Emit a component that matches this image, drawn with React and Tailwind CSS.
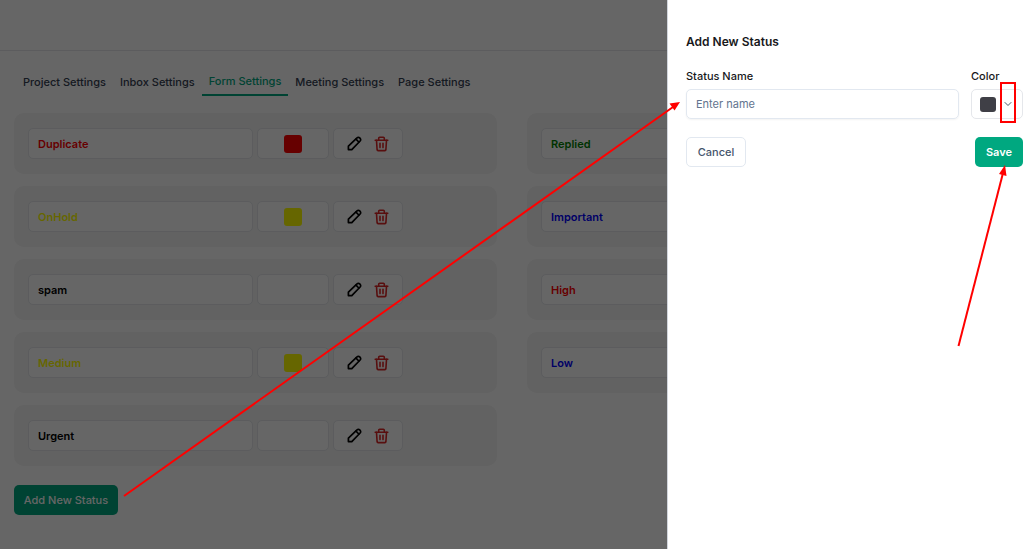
import { useState } from "react";
import { ChevronDown } from "lucide-react";

const tabs = ["Project Settings", "Inbox Settings", "Form Settings", "Meeting Settings", "Page Settings"];

const statuses = [
  { name: "Duplicate", text: "text-[#ff0000]", swatch: "bg-[#ff0000]" },
  { name: "Replied", text: "text-[#008000]", swatch: "bg-[#008000]" },
  { name: "OnHold", text: "text-[#ffff00]", swatch: "bg-[#ffff00]" },
  { name: "Important", text: "text-[#0000ff]", swatch: "bg-[#0000ff]" },
  { name: "spam", text: "text-black", swatch: "" },
  { name: "High", text: "text-[#ff0000]", swatch: "bg-[#ff0000]" },
  { name: "Medium", text: "text-[#ffff00]", swatch: "bg-[#ffff00]" },
  { name: "Low", text: "text-[#0000ff]", swatch: "bg-[#0000ff]" },
  { name: "Urgent", text: "text-black", swatch: "" },
];

const PencilIcon = () => (
  <svg width="15" height="15" viewBox="0 0 15 15" fill="none" stroke="currentColor" strokeWidth="1.7" strokeLinejoin="round" strokeLinecap="round">
    <path d="M1.4 13.6v-3.4L10 1.9a1.9 1.9 0 0 1 2.7 0l.4.4a1.9 1.9 0 0 1 0 2.7L4.8 13.6z" />
    <path d="M9 3.2l2.8 2.8" />
  </svg>
);

const TrashIcon = () => (
  <svg width="15" height="16" viewBox="0 0 15 16" fill="none" stroke="currentColor" strokeWidth="1.6" strokeLinejoin="round" strokeLinecap="round">
    <path d="M1.2 4.2h12.6" />
    <path d="M4.7 4V2.2a1 1 0 0 1 1-1h3.6a1 1 0 0 1 1 1V4" />
    <path d="M2.5 4.4l.6 9.3a1 1 0 0 0 1 .9h6.8a1 1 0 0 0 1-.9l.6-9.3" />
    <path d="M6 7.2v4.4M9 7.2v4.4" />
  </svg>
);

const StatusCard = ({ status }) => (
  <div className="flex gap-1 rounded-[10px] bg-[#f4f4f4] px-3.5 py-[15px]">
    <input
      className={`h-[31px] w-[225px] rounded-[5px] border border-gray-200 bg-white px-[9px] text-[11px] font-semibold outline-none ${status.text}`}
      aria-label="Status name"
      value={status.name}
      readOnly
    />
    <div className="flex h-[31px] w-[72px] items-center justify-center rounded-[5px] border border-gray-200 bg-white">
      {status.swatch && <span className={`h-[18px] w-[18px] rounded-[3px] ${status.swatch}`} />}
    </div>
    <div className="flex h-[31px] w-[70px] items-center justify-center gap-3 rounded-[5px] border border-gray-200 bg-white">
      <button type="button" aria-label={`Edit ${status.name}`} className="text-black">
        <PencilIcon />
      </button>
      <button type="button" aria-label={`Delete ${status.name}`} className="text-[#dc2626]">
        <TrashIcon />
      </button>
    </div>
  </div>
);

const StatusDrawer = () => {
  const [name, setName] = useState("");

  return (
    <aside className="fixed inset-y-0 right-0 w-[357px] border-l border-gray-300 bg-white pt-[34px] pr-px pl-[18px]">
      <form onSubmit={(e) => e.preventDefault()}>
        <h2 className="text-xs leading-4 font-semibold text-[#18181b]">Add New Status</h2>
        <div className="mt-[19px] flex gap-3">
          <div className="flex-1">
            <label htmlFor="statusName" className="block text-[11px] leading-[14px] font-medium text-[#18181b]">
              Status Name
            </label>
            <input
              id="statusName"
              type="text"
              className="mt-1.5 h-[30px] w-full rounded-[5px] border border-slate-200 px-[9px] text-[11px] text-gray-700 shadow-xs placeholder-slate-500 outline-none"
              placeholder="Enter name"
              value={name}
              onChange={(e) => setName(e.target.value)}
            />
          </div>
          <div className="w-[52px]">
            <label htmlFor="statusColor" className="block text-[11px] leading-[14px] font-medium text-[#18181b]">
              Color
            </label>
            <button
              id="statusColor"
              type="button"
              className="mt-1.5 flex h-[30px] w-full items-center gap-1.5 rounded-[5px] border border-gray-200 px-2"
            >
              <span className="h-[15px] w-4 shrink-0 rounded-[3px] bg-[#3f3f46]" />
              <ChevronDown className="h-3 w-3 shrink-0 text-gray-600" />
            </button>
          </div>
        </div>
        <div className="mt-[18px] flex justify-between">
          <button type="button" className="h-[30px] w-[60px] rounded-[5px] border border-slate-200 text-[11px] font-medium text-slate-600">
            Cancel
          </button>
          <button type="submit" className="h-[30px] w-12 rounded-[5px] bg-[#00a880] text-[11px] font-semibold text-white">
            Save
          </button>
        </div>
      </form>
    </aside>
  );
};

// red arrows and the box round the colour drop-down
const Annotations = () => (
  <svg className="pointer-events-none absolute top-0 left-0" width="1024" height="549" fill="none" stroke="#ff0000" strokeWidth="2">
    <path d="M124 496L673 107" />
    <path d="M680 102L674.5 110.5L669.5 103.5z" fill="#ff0000" stroke="none" />
    <path d="M958.5 346L1003 173" />
    <path d="M1005 165L1006.5 176L999 174z" fill="#ff0000" stroke="none" />
    <rect x="1001" y="83" width="14" height="39" />
  </svg>
);

const App = () => {
  const [activeTab, setActiveTab] = useState("Form Settings");

  return (
    <div className="relative min-h-screen bg-white font-['Inter',sans-serif]">
      <header className="h-[51px] border-b border-gray-200" />
      <main className="px-3.5 pt-[17px]">
        <nav className="flex items-center pl-0.5">
          {tabs.map((tab) => (
            <button
              key={tab}
              type="button"
              onClick={() => setActiveTab(tab)}
              className={`px-[7px] py-1.5 text-[11px] leading-[14px] font-medium ${
                tab === activeTab ? "border-b-2 border-[#00a880] text-[#00a880]" : "text-gray-700"
              }`}
            >
              {tab}
            </button>
          ))}
        </nav>
        <div className="mt-[17px] grid grid-cols-2 gap-x-[30px] gap-y-3">
          {statuses.map((status) => (
            <StatusCard key={status.name} status={status} />
          ))}
        </div>
        <button type="button" className="mt-[19px] h-[30px] w-[104px] rounded-[5px] bg-[#00a880] text-[11px] font-medium text-white">
          Add New Status
        </button>
      </main>
      <div className="fixed inset-0 bg-black/60" />
      <StatusDrawer />
      <Annotations />
    </div>
  );
};

export default App;
